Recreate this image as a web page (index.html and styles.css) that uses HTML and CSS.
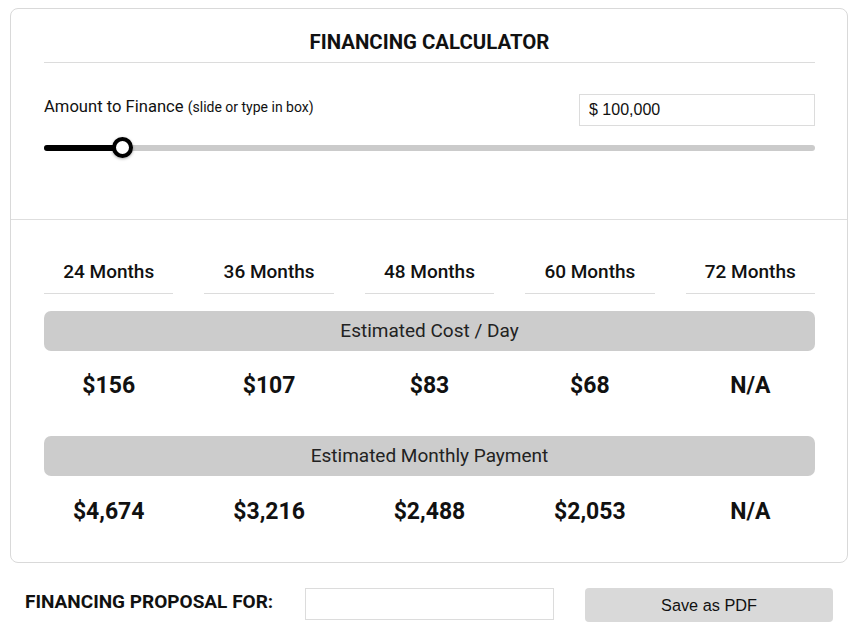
FILE: index.html
```html
<!DOCTYPE html>
<html lang="en">
<head>
<meta charset="utf-8">
<title>Financing Calculator</title>
<link rel="stylesheet" href="styles.css">
</head>
<body>
<div class="card">
  <div class="top">
    <h1 class="title">FINANCING CALCULATOR</h1>
    <div class="amount-row">
      <div class="amount-label">Amount to Finance <span class="hint">(slide or type in box)</span></div>
      <input class="amount-input" type="text" value="$ 100,000">
    </div>
    <div class="slider">
      <div class="slider-fill" style="width: 78px"></div>
      <div class="slider-thumb" style="left: 78px"></div>
    </div>
  </div>
  <div class="bottom">
    <div class="tabs">
      <div class="tab">24 Months</div>
      <div class="tab">36 Months</div>
      <div class="tab">48 Months</div>
      <div class="tab">60 Months</div>
      <div class="tab">72 Months</div>
    </div>
    <div class="band band-first">Estimated Cost / Day</div>
    <div class="values">
      <div class="value">$156</div>
      <div class="value">$107</div>
      <div class="value">$83</div>
      <div class="value">$68</div>
      <div class="value">N/A</div>
    </div>
    <div class="band">Estimated Monthly Payment</div>
    <div class="values values-last">
      <div class="value">$4,674</div>
      <div class="value">$3,216</div>
      <div class="value">$2,488</div>
      <div class="value">$2,053</div>
      <div class="value">N/A</div>
    </div>
  </div>
</div>
<div class="proposal">
  <div class="proposal-label">FINANCING PROPOSAL FOR:</div>
  <input class="proposal-input" type="text" value="">
  <button class="pdf-btn" type="button">Save as PDF</button>
</div>
</body>
</html>
```

FILE: styles.css
```css
* { box-sizing: border-box; }

body {
  margin: 0;
  padding: 8px 0 0 10px;
  font-family: Roboto, "Noto Sans", Arial, sans-serif;
  color: #111;
  background: #fff;
}

.card {
  width: 838px;
  border: 1px solid #d9d9d9;
  border-radius: 8px;
}

.top {
  padding: 0 32px 0 33px;
  height: 211px;
  border-bottom: 1px solid #dedede;
}

.title {
  margin: 0;
  padding: 21px 0 8px;
  font-size: 20.4px;
  line-height: 24px;
  font-weight: 700;
  text-align: center;
  color: #111;
  border-bottom: 1px solid #dcdcdc;
}

.amount-row {
  margin-top: 31px;
  display: flex;
  justify-content: space-between;
  align-items: flex-start;
}

.amount-label {
  padding-top: 1px;
  font-size: 16.6px;
  line-height: 24px;
  color: #111;
}

.hint {
  font-size: 14px;
}

.amount-input {
  width: 236px;
  height: 32px;
  border: 1px solid #dcdcdc;
  padding: 0 9px;
  font-family: "Liberation Sans", Arial, sans-serif;
  font-size: 16px;
  color: #111;
  outline: none;
}

.slider {
  position: relative;
  margin-top: 19px;
  height: 6px;
  border-radius: 3px;
  background: #cbcbcb;
}

.slider-fill {
  height: 6px;
  border-radius: 3px;
  background: #000;
}

.slider-thumb {
  position: absolute;
  top: -8px;
  width: 21px;
  height: 21px;
  margin-left: -10px;
  border-radius: 50%;
  background: #fff;
  border: 4px solid #000;
  box-shadow: 0 1px 3px rgba(0,0,0,0.35);
}

.bottom {
  padding: 40px 32px 0 33px;
}

.tabs, .values {
  display: grid;
  grid-template-columns: repeat(5, 1fr);
  column-gap: 31px;
}

.tab {
  text-align: center;
  font-size: 19px;
  line-height: 24px;
  font-weight: 500;
  padding-bottom: 9px;
  border-bottom: 1px solid #dcdcdc;
  color: #111;
}

.band {
  height: 40px;
  line-height: 40px;
  background: #cccccc;
  border-radius: 7px;
  text-align: center;
  font-size: 19px;
  color: #222;
}

.band-first {
  margin-top: 17px;
}

.values {
  padding: 20px 0 35px;
}

.values-last {
  padding: 21px 0 35px;
}

.value {
  text-align: center;
  font-size: 23px;
  line-height: 30px;
  font-weight: 700;
  color: #111;
}

.proposal {
  margin-top: 25px;
  padding-left: 15px;
  display: flex;
  align-items: flex-start;
}

.proposal-label {
  width: 280px;
  font-size: 19px;
  font-weight: 700;
  line-height: 28px;
  color: #111;
}

.proposal-input {
  width: 249px;
  height: 32px;
  border: 1px solid #dcdcdc;
  outline: none;
}

.pdf-btn {
  margin-left: 31px;
  width: 248px;
  height: 34px;
  border: none;
  border-radius: 4px;
  background: #d9d9d9;
  font-family: "Liberation Sans", Arial, sans-serif;
  font-size: 16.3px;
  color: #111;
}
```
